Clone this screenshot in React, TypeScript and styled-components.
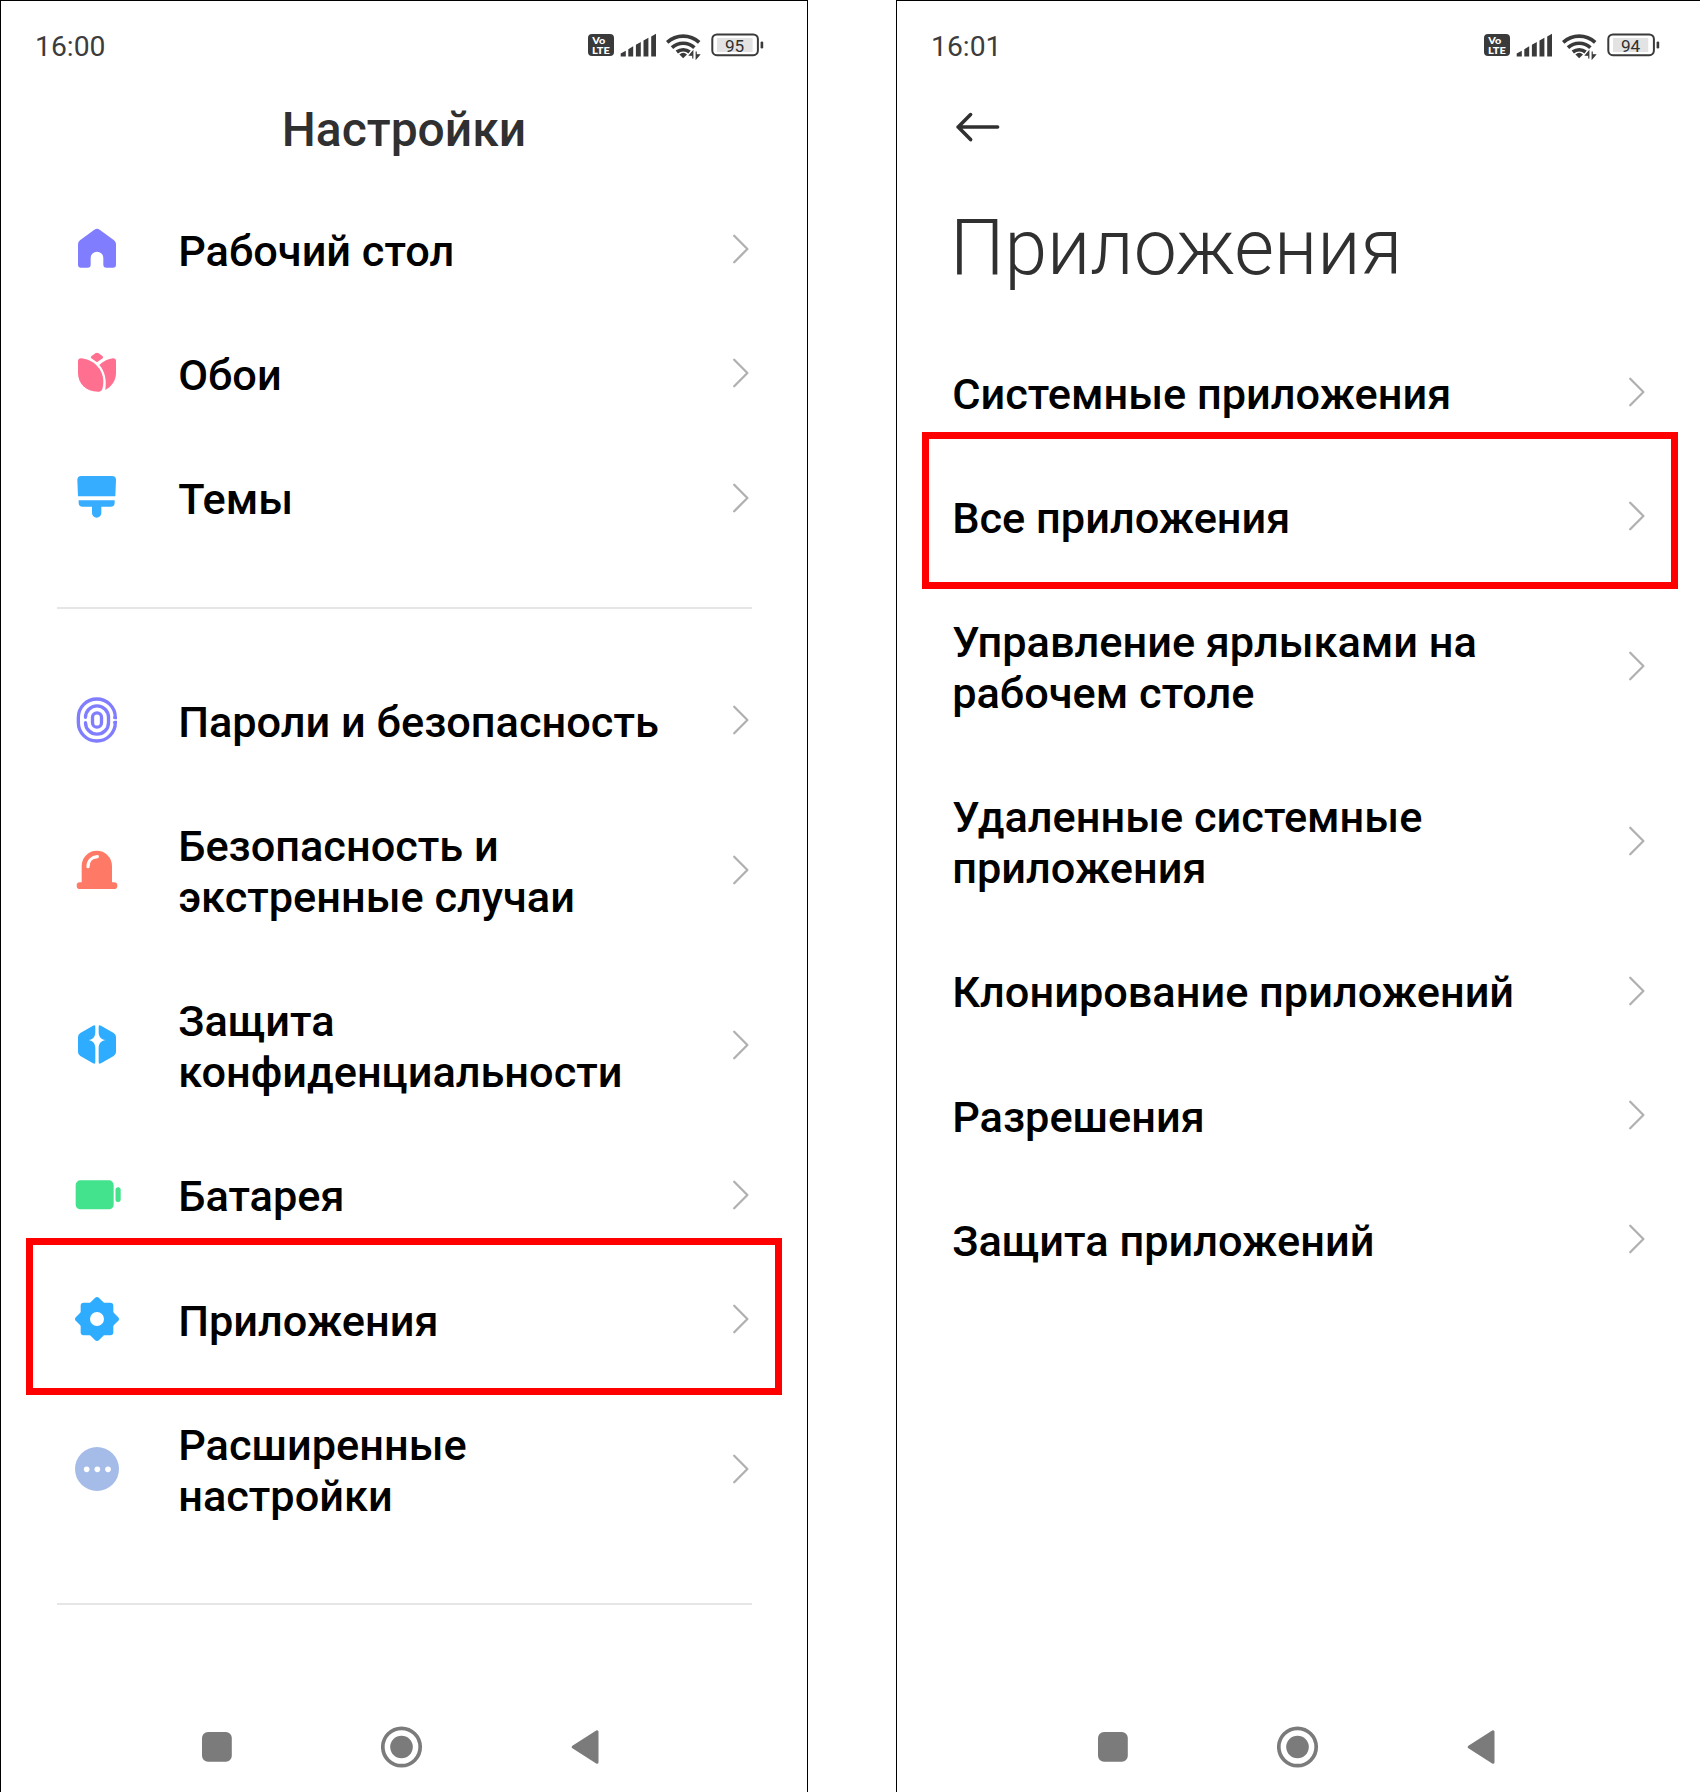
import React from 'react';
import styled, { createGlobalStyle } from 'styled-components';

const GlobalStyle = createGlobalStyle`
  *, *::before, *::after { box-sizing: border-box; }
  body { margin: 0; background: #fff; }
`;

const Board = styled.div`
  display: flex;
  gap: 88px;
  width: 1700px;
  height: 1792px;
  overflow: hidden;
  background: #fff;
  font-family: Roboto, 'Noto Sans', sans-serif;
`;

const Phone = styled.section<{ $cut?: boolean }>`
  display: flex;
  flex-direction: column;
  flex: none;
  width: ${(p) => (p.$cut ? 804 : 808)}px;
  height: 1792px;
  border: 1px solid #000;
  border-bottom: 0;
  ${(p) => p.$cut && 'border-right: 0;'}
`;

const StatusBar = styled.header`
  display: flex;
  align-items: center;
  height: 89px;
  padding-left: 34px;
`;

const Clock = styled.time`
  width: 553px;
  padding-top: 3px;
  font-size: 28.3px;
  line-height: 34px;
  color: #3c3c3c;
`;

const StatusIcons = styled.div`
  display: flex;
  align-items: flex-start;
  height: 31.4px;
  svg { display: block; flex: none; }
`;

const CenterTitle = styled.h1`
  margin: 0;
  height: 96.8px;
  padding-top: 9.5px;
  text-align: center;
  font-size: 48px;
  font-weight: 500;
  line-height: 60px;
  color: #303030;
`;

const BackBar = styled.div`
  display: flex;
  align-items: center;
  height: 74px;
  padding-left: 56px;
`;

const BackButton = styled.button`
  display: flex;
  padding: 0;
  border: 0;
  background: none;
`;

const PageTitle = styled.h1`
  margin: 0;
  height: 166px;
  padding: 38.5px 0 0 53px;
  font-size: 76.9px;
  font-weight: 300;
  line-height: 90px;
  color: #303030;
`;

const List = styled.ul`
  margin: 0;
  padding: 0;
  list-style: none;
`;

const Item = styled.li<{ $lines?: number; $inset: number }>`
  position: relative;
  display: flex;
  align-items: center;
  height: ${(p) => (p.$lines === 2 ? 175 : 124.3)}px;
  padding-left: ${(p) => p.$inset}px;
`;

const IconSlot = styled.span`
  display: flex;
  flex: none;
  width: 105px;
`;

const Label = styled.span<{ $width: number }>`
  flex: none;
  width: ${(p) => p.$width}px;
  padding-top: 4.2px;
  font-size: 43.3px;
  font-weight: 500;
  line-height: 51px;
  color: #000;
`;

const ChevronSlot = styled.span<{ $gap: number }>`
  display: flex;
  flex: none;
  margin-left: ${(p) => p.$gap}px;
`;

const Highlight = styled.span<{ $top: number }>`
  position: absolute;
  top: ${(p) => p.$top}px;
  left: 25px;
  width: 756px;
  height: 157px;
  border: 7px solid #f00;
  pointer-events: none;
`;

const Divider = styled.hr`
  width: 695px;
  height: 2px;
  margin: 47.4px 0 49.1px 56px;
  border: 0;
  background: #e6e6e6;
`;

const NavBar = styled.nav<{ $lift?: number }>`
  display: flex;
  align-items: center;
  height: 90px;
  margin-top: auto;
  padding: 0 0 ${(p) => p.$lift ?? 0}px 201px;
  svg { display: block; flex: none; }
`;

const NavGap = styled.span<{ $w: number }>`
  flex: none;
  width: ${(p) => p.$w}px;
`;

const Glyph = ({ children, fill }: { children: React.ReactNode; fill: string }) => (
  <svg width="48" height="48" viewBox="0 0 144 144" fill={fill}>{children}</svg>
);

const icons: Record<string, React.ReactNode> = {
  home: (
    <Glyph fill="#807dff">
      <path d="M64 14 Q72 8 80 14 L123 46 Q129 51 129 58 V119 Q129 128 120 128 H100 Q91 128 91 119 V99 A19 19 0 0 0 53 99 V119 Q53 128 44 128 H24 Q15 128 15 119 V58 Q15 51 21 46 Z" />
    </Glyph>
  ),
  tulip: (
    <Glyph fill="#ff6f8f">
      <path d="M67 13 Q72 9 77 13 L89 22 Q92 25 89 28 L72 40 L55 28 Q52 25 55 22 Z" />
      <path d="M15 37 Q15 28 24 28 C56 30 91 57 91 98 C91 110 89 118 86 124 Q84 127 79 128 C40 130 15 104 15 72 Z" />
      <path d="M79 48 C92 36 106 30 120 28 Q129 28 129 36 V72 C129 94 116 113 97 123 C101 95 97 68 79 48 Z" />
    </Glyph>
  ),
  brush: (
    <Glyph fill="#36adff">
      <path d="M13 18 Q13 6 25 6 H117 Q129 6 129 18 L127 67 H15 Z" />
      <path d="M17 79 H125 V86 Q125 98 113 98 H85 V117 A14 14 0 0 1 57 117 V98 H29 Q17 98 17 86 Z" />
    </Glyph>
  ),
  fingerprint: (
    <Glyph fill="none">
      <g stroke="#807dff" strokeWidth="10" strokeLinecap="round">
        <path d="M125 64.5 H127 A55.5 55.5 0 0 0 16 64.5 V79.5 A55.5 55.5 0 0 0 127 79.5 H125" />
        <path d="M37.5 64 A34.5 34.5 0 0 1 106.5 64 V80 A34.5 34.5 0 0 1 37.5 80" />
        <rect x="58.5" y="50.5" width="27" height="43" rx="13.5" />
      </g>
    </Glyph>
  ),
  siren: (
    <Glyph fill="#ff7a66">
      <path d="M26 109 V60 A45.5 46 0 0 1 117 60 V109 H123 A10 10 0 0 1 123 129 H21 A10 10 0 0 1 21 109 Z" />
      <path d="M73 32 C57 33 45 44 45 62" fill="none" stroke="#fff" strokeWidth="9.5" strokeLinecap="round" />
    </Glyph>
  ),
  privacy: (
    <Glyph fill="#2eacff">
      <path d="M67 17 Q67 10 60 14 L22 36 Q15 40 15 48 V93 Q15 101 22 105 L60 127 Q67 131 67 124 V80 C66 66 60 60 47 57 C60 54 66 48 67 35 Z" />
      <path d="M77 17 Q77 10 84 14 L122 36 Q129 40 129 48 V93 Q129 101 122 105 L84 127 Q77 131 77 124 V80 C78 66 84 60 97 57 C84 54 78 48 77 35 Z" />
    </Glyph>
  ),
  battery: (
    <Glyph fill="#42e38c">
      <rect x="8" y="28" width="114" height="87" rx="14" />
      <rect x="127.5" y="49" width="15.5" height="44" rx="7.5" />
    </Glyph>
  ),
  gear: (
    <Glyph fill="#2eacff">
      <rect x="23" y="23" width="98" height="98" rx="9" />
      <rect x="23" y="23" width="98" height="98" rx="9" transform="rotate(45 72 72)" />
      <circle cx="72" cy="72" r="21" fill="#fff" />
    </Glyph>
  ),
  more: (
    <Glyph fill="#a6bce8">
      <circle cx="72" cy="72" r="66" />
      <g fill="#fff">
        <circle cx="41" cy="73" r="8.5" />
        <circle cx="73" cy="73" r="8.5" />
        <circle cx="105" cy="73" r="8.5" />
      </g>
    </Glyph>
  ),
};

const Chevron = () => (
  <svg width="18" height="32" viewBox="0 0 18 32" fill="none" stroke="#b0b0b0" strokeWidth="2.3" strokeLinecap="round" strokeLinejoin="round">
    <path d="M2.2 2.8 L15.4 16 L2.2 29.2" />
  </svg>
);

const Status = ({ time, level }: { time: string; level: number }) => (
  <StatusBar>
    <Clock>{time}</Clock>
    <StatusIcons>
      <svg width="32" height="30" viewBox="0 0 32 30">
        <rect x="0" y="4" width="26" height="22" rx="4" fill="#3a3a3a" />
        <g fill="#fff" fontFamily="Lato, sans-serif" fontWeight="900">
          <text x="4.2" y="14.2" fontSize="9.4" textLength="13" lengthAdjust="spacingAndGlyphs">Vo</text>
          <text x="4" y="23.8" fontSize="10" textLength="17.8" lengthAdjust="spacingAndGlyphs">LTE</text>
        </g>
      </svg>
      <svg width="46" height="30" viewBox="0 0 46 30" fill="#3a3a3a">
        <path d="M.7 23.5 L5.8 20.7 V26.5 H.7 Z M8.3 19.3 L13.2 16.3 V26.5 H8.3 Z M15.9 14.8 L20.8 12 V26.5 H15.9 Z M23.5 10.5 L28.4 7.7 V26.5 H23.5 Z M31.2 6.5 L36 3.8 V26.5 H31.2 Z" />
      </svg>
      <svg width="45" height="30" viewBox="0 0 45 30">
        <g fill="none" stroke="#3a3a3a" strokeWidth="3.6">
          <path d="M1.2 12.4 A23.6 23.6 0 0 1 33.2 12.4" />
          <path d="M6 17.6 A16.4 16.4 0 0 1 28.4 17.6" />
          <path d="M10.8 22 A10 10 0 0 1 23.6 22" />
        </g>
        <path d="M13.4 24.4 Q17.2 21 21 24.4 L17.2 28.2 Z" fill="#3a3a3a" />
        <path d="M26.8 28.6 V21.4 L23.6 25.2 H26.8 M30.2 21.4 V28.6 L33.4 24.8 H30.2" fill="#3a3a3a" stroke="#3a3a3a" strokeWidth="1.2" />
      </svg>
      <svg width="54" height="30" viewBox="0 0 54 30">
        <rect x="1.3" y="4.4" width="45.6" height="20.8" rx="4.6" fill="#fff" stroke="#3a3a3a" strokeWidth="2" />
        <rect x="6" y="8" width={level * 0.375} height="14" fill="#e3e3e3" />
        <rect x="49.6" y="11.4" width="2.6" height="7" rx="1.2" fill="#3a3a3a" />
        <text x="23.6" y="21.6" fontSize="17.2" textAnchor="middle" fill="#303030" fontFamily="Roboto, sans-serif">{level}</text>
      </svg>
    </StatusIcons>
  </StatusBar>
);

const Navigation = ({ lift }: { lift?: number }) => (
  <NavBar $lift={lift}>
    <svg width="30" height="30" viewBox="0 0 30 30"><rect width="29.8" height="29.8" rx="6" fill="#7b7b7b" /></svg>
    <NavGap $w={149} />
    <svg width="42" height="42" viewBox="0 0 42 42">
      <circle cx="20.5" cy="21" r="18.7" fill="none" stroke="#7b7b7b" strokeWidth="3.7" />
      <circle cx="20.5" cy="21" r="11.3" fill="#7b7b7b" />
    </svg>
    <NavGap $w={147} />
    <svg width="32" height="40" viewBox="0 0 32 40">
      <path d="M3.2 20 L27 4.8 V35.2 Z" fill="#7b7b7b" stroke="#7b7b7b" strokeWidth="3" strokeLinejoin="round" />
    </svg>
  </NavBar>
);

type RowData = { icon?: string; text: string; lines?: number; marked?: boolean };

const Row = ({ icon, text, lines, marked }: RowData) => (
  <Item $lines={lines} $inset={icon ? 72.2 : 55.2}>
    {icon && <IconSlot>{icons[icon]}</IconSlot>}
    <Label $width={icon ? 500 : 620}>{text}</Label>
    <ChevronSlot $gap={icon ? 54.3 : 56.2}><Chevron /></ChevronSlot>
    {marked && <Highlight $top={icon ? -19 : -22.3} />}
  </Item>
);

const personal: RowData[] = [
  { icon: 'home', text: 'Рабочий стол' },
  { icon: 'tulip', text: 'Обои' },
  { icon: 'brush', text: 'Темы' },
];

const system: RowData[] = [
  { icon: 'fingerprint', text: 'Пароли и безопасность' },
  { icon: 'siren', text: 'Безопасность и экстренные случаи', lines: 2 },
  { icon: 'privacy', text: 'Защита конфиденциальности', lines: 2 },
  { icon: 'battery', text: 'Батарея' },
  { icon: 'gear', text: 'Приложения', marked: true },
  { icon: 'more', text: 'Расширенные настройки', lines: 2 },
];

const apps: RowData[] = [
  { text: 'Системные приложения' },
  { text: 'Все приложения', marked: true },
  { text: 'Управление ярлыками на рабочем столе', lines: 2 },
  { text: 'Удаленные системные приложения', lines: 2 },
  { text: 'Клонирование приложений' },
  { text: 'Разрешения' },
  { text: 'Защита приложений' },
];

const Rows = ({ data }: { data: RowData[] }) => (
  <List>{data.map((row) => <Row key={row.text} {...row} />)}</List>
);

export default function App() {
  return (
    <>
      <GlobalStyle />
      <Board>
        <Phone>
          <Status time="16:00" level={95} />
          <CenterTitle>Настройки</CenterTitle>
          <Rows data={personal} />
          <Divider />
          <Rows data={system} />
          <Divider />
          <Navigation />
        </Phone>
        <Phone $cut>
          <Status time="16:01" level={94} />
          <BackBar>
            <BackButton aria-label="Назад">
              <svg width="50" height="36" viewBox="0 0 50 36" fill="none" stroke="#303030" strokeWidth="3.6" strokeLinecap="round" strokeLinejoin="round">
                <path d="M44.6 18 H5 M17.6 5.6 L5.2 18 L17.6 30.6" />
              </svg>
            </BackButton>
          </BackBar>
          <PageTitle>Приложения</PageTitle>
          <Rows data={apps} />
          <Navigation lift={1} />
        </Phone>
      </Board>
    </>
  );
}
